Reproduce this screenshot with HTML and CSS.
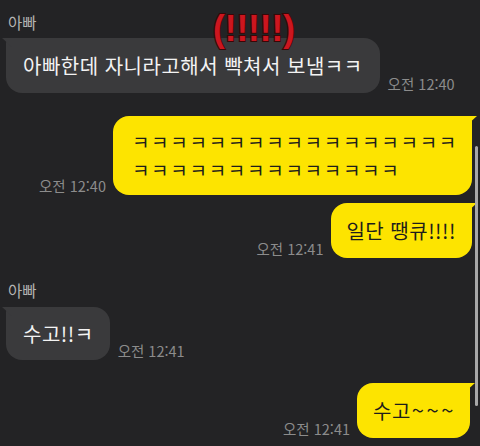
FILE: index.html
```html
<!DOCTYPE html>
<html lang="ko">
<head>
<meta charset="utf-8">
<link rel="stylesheet" href="styles.css">
</head>
<body>
<div class="chat">
  <div class="name">아빠</div>
  <div class="row">
    <div class="bubble other b1">아빠한데 자니라고해서 빡쳐서 보냄ㅋㅋ</div>
    <div class="time">오전 12:40</div>
  </div>
  <div class="row me r2">
    <div class="time">오전 12:40</div>
    <div class="bubble mine b2"><span class="kk">ㅋㅋㅋㅋㅋㅋㅋㅋㅋㅋㅋㅋㅋㅋㅋㅋㅋ</span><br><span class="kk">ㅋㅋㅋㅋㅋㅋㅋㅋㅋㅋㅋㅋㅋㅋ</span></div>
  </div>
  <div class="row me r3">
    <div class="time">오전 12:41</div>
    <div class="bubble mine b3">일단 땡큐!!!!</div>
  </div>
  <div class="name n2">아빠</div>
  <div class="row">
    <div class="bubble other b4">수고!!ㅋ</div>
    <div class="time">오전 12:41</div>
  </div>
  <div class="row me r5">
    <div class="time">오전 12:41</div>
    <div class="bubble mine b5">수고<span class="tilde">~~~</span></div>
  </div>
</div>
<div class="shout">(!!!!!)</div>
<div class="scrollbar"></div>
</body>
</html>
```
FILE: styles.css
```css
html, body {
  margin: 0;
  padding: 0;
}
body {
  width: 480px;
  height: 446px;
  overflow: hidden;
  position: relative;
  background: #232325;
  font-family: "Noto Sans CJK KR", "Noto Sans", sans-serif;
}
.chat {
  display: flex;
  flex-direction: column;
  padding: 13px 8px 0 6px;
}
.name {
  font-size: 15.5px;
  line-height: 18px;
  color: #b3b3b3;
  margin-left: 2px;
  margin-bottom: 7px;
}
.n2 {
  margin-top: 23px;
  margin-bottom: 8px;
}
.row {
  display: flex;
  align-items: flex-end;
  gap: 8px;
}
.row.me {
  justify-content: flex-end;
}
.r2 { margin-top: 23px; gap: 7px; }
.r3 { margin-top: 8px; }
.r5 { margin-top: 23px; gap: 7px; margin-right: 2px; }
.time {
  font-size: 14.5px;
  line-height: 16px;
  color: #8c8c8c;
  margin-bottom: 1px;
  white-space: nowrap;
}
.bubble {
  position: relative;
  font-size: 20px;
  letter-spacing: 0.5px;
  white-space: nowrap;
  border-radius: 16px;
}
.other {
  background: #3a3a3c;
  color: #f3f3f3;
  border-top-left-radius: 5px;
}
.other::before {
  content: "";
  position: absolute;
  left: -4px;
  top: 0;
  width: 10px;
  height: 9px;
  background: #3a3a3c;
  clip-path: polygon(0 0, 100% 0, 100% 100%);
}
.mine {
  background: #fde400;
  color: #1d1d1b;
  border-top-right-radius: 5px;
}
.mine::after {
  content: "";
  position: absolute;
  right: -5px;
  top: 0;
  width: 10px;
  height: 9px;
  background: #fde400;
  clip-path: polygon(100% 0, 0 0, 0 100%);
}
.b1 {
  padding: 15px 17px;
  line-height: 25px;
}
.b2 {
  padding: 12px 14px 12px 19px;
  line-height: 27.5px;
}
.kk {
  font-size: 19px;
  letter-spacing: 1.7px;
}
.b3 {
  padding: 15px 16px 15px 15px;
  line-height: 25px;
}
.b4 {
  padding: 14px 16px 14px 17px;
  line-height: 25px;
}
.b5 {
  padding: 14px 14px 15px 16px;
  line-height: 25px;
}
.tilde {
  font-size: 22px;
  letter-spacing: 2.5px;
  margin-left: 1px;
}
.shout {
  position: absolute;
  left: 213px;
  top: 8px;
  font-family: "Liberation Sans", sans-serif;
  font-weight: bold;
  font-size: 37px;
  line-height: 42px;
  color: #cc161f;
  -webkit-text-stroke: 2px #3a0606;
  paint-order: stroke fill;
  transform: scaleX(0.95);
  transform-origin: left top;
}
.scrollbar {
  position: absolute;
  left: 475px;
  top: 146px;
  width: 3px;
  height: 260px;
  border-radius: 2px;
  background: #a8a8a8;
}
```
